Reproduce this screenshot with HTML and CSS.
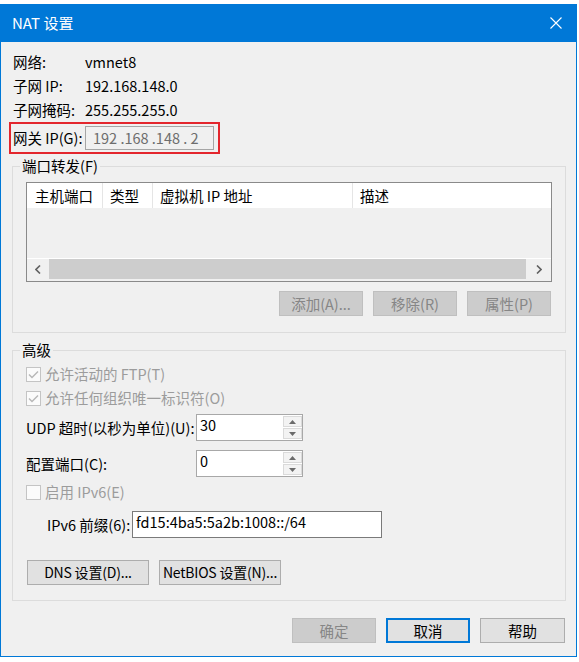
FILE: index.html
```html
<!DOCTYPE html>
<html lang="zh-CN">
<head>
  <meta charset="UTF-8">
  <title>NAT 设置</title>
  <link rel="stylesheet" href="styles.css">
</head>
<body>
  <div class="window">
    <div class="titlebar">
      <span class="title">NAT 设置</span>
      <svg class="close" width="12" height="12" viewBox="0 0 12 12">
        <path d="M0.5 0.5 L11.5 11.5 M11.5 0.5 L0.5 11.5" stroke="#fff" stroke-width="1.1" fill="none"/>
      </svg>
    </div>

    <div class="content">
      <div class="info-row"><span class="label">网络:</span><span>vmnet8</span></div>
      <div class="info-row"><span class="label">子网 IP:</span><span>192.168.148.0</span></div>
      <div class="info-row"><span class="label">子网掩码:</span><span>255.255.255.0</span></div>

      <!-- highlighted gateway row -->
      <div class="gateway">
        <span class="label">网关 IP(G):</span>
        <div class="ip-input">192 .168 .148 . 2</div>
      </div>

      <fieldset class="group">
        <legend>端口转发(F)</legend>
        <div class="listview">
          <div class="list-head">
            <div class="col c1">主机端口</div>
            <div class="col c2">类型</div>
            <div class="col c3">虚拟机 IP 地址</div>
            <div class="col c4">描述</div>
          </div>
          <div class="list-body"></div>
          <div class="hscroll">
            <span class="arrow left">
              <svg width="6" height="9" viewBox="0 0 6 9"><path d="M5 0.5 L1 4.5 L5 8.5" stroke="#606060" stroke-width="1.6" fill="none"/></svg>
            </span>
            <span class="thumb"></span>
            <span class="arrow right">
              <svg width="6" height="9" viewBox="0 0 6 9"><path d="M1 0.5 L5 4.5 L1 8.5" stroke="#606060" stroke-width="1.6" fill="none"/></svg>
            </span>
          </div>
        </div>
        <div class="btn-row">
          <button class="btn" disabled>添加(A)...</button>
          <button class="btn" disabled>移除(R)</button>
          <button class="btn" disabled>属性(P)</button>
        </div>
      </fieldset>

      <fieldset class="group advanced">
        <legend>高级</legend>

        <div class="check-row first disabled">
          <span class="box"><svg width="13" height="13" viewBox="0 0 13 13"><path d="M2 6.5 L5 9.5 L11 3.5" stroke="#b8b8b8" stroke-width="1.5" fill="none"/></svg></span>
          <span>允许活动的 FTP(T)</span>
        </div>
        <div class="check-row disabled">
          <span class="box"><svg width="13" height="13" viewBox="0 0 13 13"><path d="M2 6.5 L5 9.5 L11 3.5" stroke="#b8b8b8" stroke-width="1.5" fill="none"/></svg></span>
          <span>允许任何组织唯一标识符(O)</span>
        </div>

        <div class="field-row udp">
          <span class="label">UDP 超时(以秒为单位)(U):</span>
          <div class="spin">
            <span class="value">30</span>
            <span class="arrows">
              <span class="spin-btn"><svg width="7" height="4" viewBox="0 0 7 4"><path d="M0 4 L3.5 0 L7 4 Z" fill="#6b6b6b"/></svg></span>
              <span class="spin-btn"><svg width="7" height="4" viewBox="0 0 7 4"><path d="M0 0 L7 0 L3.5 4 Z" fill="#6b6b6b"/></svg></span>
            </span>
          </div>
        </div>
        <div class="field-row port">
          <span class="label">配置端口(C):</span>
          <div class="spin">
            <span class="value">0</span>
            <span class="arrows">
              <span class="spin-btn"><svg width="7" height="4" viewBox="0 0 7 4"><path d="M0 4 L3.5 0 L7 4 Z" fill="#6b6b6b"/></svg></span>
              <span class="spin-btn"><svg width="7" height="4" viewBox="0 0 7 4"><path d="M0 0 L7 0 L3.5 4 Z" fill="#6b6b6b"/></svg></span>
            </span>
          </div>
        </div>

        <div class="check-row ipv6 disabled">
          <span class="box"></span>
          <span>启用 IPv6(E)</span>
        </div>

        <div class="field-row prefix">
          <span class="label">IPv6 前缀(6):</span>
          <div class="text-input">fd15:4ba5:5a2b:1008::/64</div>
        </div>

        <div class="setting-buttons">
          <button class="btn wide">DNS 设置(D)...</button>
          <button class="btn wide">NetBIOS 设置(N)...</button>
        </div>
      </fieldset>

      <div class="dialog-buttons">
        <button class="btn" disabled>确定</button>
        <button class="btn default">取消</button>
        <button class="btn help">帮助</button>
      </div>
    </div>
  </div>
</body>
</html>
```

FILE: styles.css
```css
* {
  box-sizing: border-box;
}

body {
  margin: 0;
  padding-top: 4px;
  background: #fff;
  font-family: "Noto Sans CJK SC", "Noto Sans", sans-serif;
  font-size: 14.5px;
  color: #000;
}

/* Window frame */
.window {
  width: 577px;
  height: 653px;
  border: 1px solid #0078d7;
  border-top: 0;
  background: #f0f0f0;
  display: flex;
  flex-direction: column;
}

.titlebar {
  height: 38px;
  flex: none;
  background: #0078d7;
  color: #fff;
  display: flex;
  align-items: center;
  justify-content: space-between;
  padding: 0 14px 0 11px;
}

.title {
  font-size: 15px;
  line-height: 20px;
}

.content {
  padding-top: 8px;
}

/* Top info */
.info-row {
  display: flex;
  align-items: center;
  height: 24px;
  padding-left: 12px;
  line-height: 18px;
}

.info-row .label,
.gateway .label {
  width: 72px;
}

.gateway {
  display: flex;
  align-items: center;
  width: fit-content;
  margin-left: 8px;
  border: 2px solid #e3262d;
  padding: 2px 4px 2px 2px;
  line-height: 18px;
}

.ip-input {
  width: 129px;
  height: 24px;
  border: 1px solid #a5a5a5;
  padding-left: 7px;
  line-height: 22px;
  color: #6d6d6d;
  white-space: pre;
  overflow: hidden;
}

/* Group boxes */
.group {
  margin: 3px 10px 0 11px;
  padding: 0;
  border: 1px solid #dcdcdc;
  min-width: 0;
}

.group + .group {
  margin-top: 8px;
}

.group legend {
  margin-left: 7px;
  padding: 0 2px;
  line-height: 18px;
}

/* List view */
.listview {
  margin: 7px 13px 0;
  height: 100px;
  border: 1px solid #8a8a8a;
  background: #f0f0f0;
  display: flex;
  flex-direction: column;
}

.list-head {
  height: 25px;
  flex: none;
  background: #fff;
  display: flex;
}

.list-head .col {
  padding-left: 7px;
  line-height: 25px;
  border-right: 1px solid #e5e5e5;
}

.list-head .c1 { width: 76px; padding-left: 8px; }
.list-head .c2 { width: 50px; }
.list-head .c3 { width: 200px; }
.list-head .c4 { flex: 1; border-right: 0; }

.list-body {
  flex: 1;
}

.hscroll {
  height: 23px;
  flex: none;
  border-top: 1px solid #fff;
  padding-bottom: 2px;
  display: flex;
}

.hscroll .arrow {
  display: flex;
  align-items: center;
  justify-content: center;
}

.hscroll .left { width: 22px; }
.hscroll .right { width: 25px; }

.hscroll .thumb {
  flex: 1;
  background: #cdcdcd;
}

/* Buttons */
.btn {
  width: 84px;
  height: 25px;
  padding: 0;
  border: 1px solid #adadad;
  background: #e1e1e1;
  font-family: inherit;
  font-size: 14.5px;
  line-height: 21px;
  color: #000;
  white-space: nowrap;
}

.btn:disabled {
  background: #cccccc;
  border-color: #bfbfbf;
  color: #868686;
}

.btn.wide {
  width: 122px;
  font-size: 14px;
  letter-spacing: -0.2px;
}

.btn.default {
  border: 2px solid #0078d7;
}

.btn.help {
  width: 85px;
}

.btn-row {
  display: flex;
  justify-content: flex-end;
  gap: 10px;
  margin: 9px 14px 16px;
}

/* Advanced group */
.check-row {
  display: flex;
  align-items: center;
  gap: 4px;
  height: 24px;
  padding-left: 13px;
  line-height: 18px;
}

.check-row.first { margin-top: 3px; }
.check-row.ipv6 { margin-top: 3px; }

.check-row.disabled {
  color: #9c9c9c;
}

.box {
  width: 15px;
  height: 15px;
  border: 1px solid #c4c4c4;
  background: #fbfbfb;
  display: flex;
  align-items: center;
  justify-content: center;
}

.field-row {
  display: flex;
  align-items: center;
  padding-left: 13px;
  line-height: 18px;
}

.field-row .label {
  width: 170px;
}

.field-row.udp { margin-top: 4px; }
.field-row.port { margin-top: 9px; }

.spin {
  width: 107px;
  height: 27px;
  border: 1px solid #a8a8a8;
  background: #fff;
  display: flex;
}

.spin .value {
  flex: 1;
  padding: 1px 0 0 3px;
}

.spin .arrows {
  width: 19px;
  margin: 1px 0 1px 0;
  display: flex;
  flex-direction: column;
  gap: 1px;
}

.spin-btn {
  flex: 1;
  border: 1px solid #dadada;
  background: #f3f3f3;
  display: flex;
  align-items: center;
  justify-content: center;
}

.field-row.prefix {
  margin-top: 7px;
  padding-left: 34px;
}

.field-row.prefix .label {
  width: 85px;
}

.text-input {
  width: 250px;
  height: 27px;
  border: 1px solid #7a7a7a;
  background: #fff;
  padding: 1px 0 0 3px;
}

.setting-buttons {
  display: flex;
  gap: 10px;
  margin: 22px 0 15px 14px;
}

.dialog-buttons {
  display: flex;
  justify-content: flex-end;
  gap: 10px;
  margin: 17px 11px 0 0;
}
```
